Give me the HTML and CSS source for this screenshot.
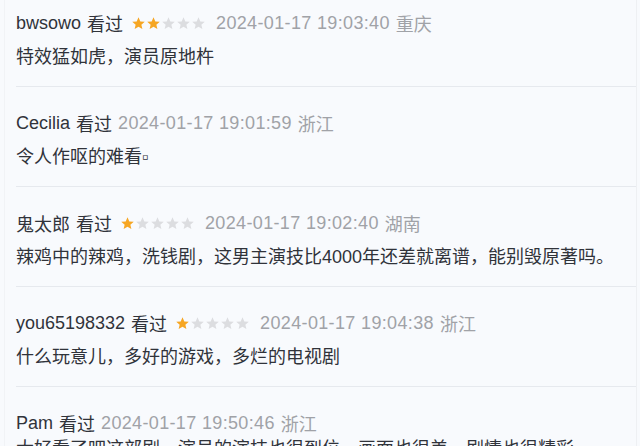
FILE: index.html
```html
<!DOCTYPE html>
<html lang="zh-CN">
<head>
  <meta charset="UTF-8">
  <meta name="viewport" content="width=device-width, initial-scale=1.0">
  <title>短评</title>
  <link rel="stylesheet" href="styles.css">
</head>
<body>
  <main class="comments">
    <div class="comment">
      <div class="comment-info">
        <span class="user">bwsowo</span>
        <span class="watched">看过</span>
        <span class="stars" data-rating="2">
          <svg viewBox="0 0 24 24"><path class="on" d="M12 2l2.9 6.6 7.1.6-5.4 4.7 1.6 7-6.2-3.7-6.2 3.7 1.6-7L2 9.2l7.1-.6z"/></svg>
          <svg viewBox="0 0 24 24"><path class="on" d="M12 2l2.9 6.6 7.1.6-5.4 4.7 1.6 7-6.2-3.7-6.2 3.7 1.6-7L2 9.2l7.1-.6z"/></svg>
          <svg viewBox="0 0 24 24"><path d="M12 2l2.9 6.6 7.1.6-5.4 4.7 1.6 7-6.2-3.7-6.2 3.7 1.6-7L2 9.2l7.1-.6z"/></svg>
          <svg viewBox="0 0 24 24"><path d="M12 2l2.9 6.6 7.1.6-5.4 4.7 1.6 7-6.2-3.7-6.2 3.7 1.6-7L2 9.2l7.1-.6z"/></svg>
          <svg viewBox="0 0 24 24"><path d="M12 2l2.9 6.6 7.1.6-5.4 4.7 1.6 7-6.2-3.7-6.2 3.7 1.6-7L2 9.2l7.1-.6z"/></svg>
        </span>
        <span class="time">2024-01-17 19:03:40</span>
        <span class="location">重庆</span>
      </div>
      <p class="comment-text">特效猛如虎，演员原地杵</p>
    </div>

    <div class="comment">
      <div class="comment-info">
        <span class="user">Cecilia</span>
        <span class="watched">看过</span>
        <span class="time">2024-01-17 19:01:59</span>
        <span class="location">浙江</span>
      </div>
      <p class="comment-text">令人作呕的难看▫</p>
    </div>

    <div class="comment">
      <div class="comment-info">
        <span class="user">鬼太郎</span>
        <span class="watched">看过</span>
        <span class="stars" data-rating="1">
          <svg viewBox="0 0 24 24"><path class="on" d="M12 2l2.9 6.6 7.1.6-5.4 4.7 1.6 7-6.2-3.7-6.2 3.7 1.6-7L2 9.2l7.1-.6z"/></svg>
          <svg viewBox="0 0 24 24"><path d="M12 2l2.9 6.6 7.1.6-5.4 4.7 1.6 7-6.2-3.7-6.2 3.7 1.6-7L2 9.2l7.1-.6z"/></svg>
          <svg viewBox="0 0 24 24"><path d="M12 2l2.9 6.6 7.1.6-5.4 4.7 1.6 7-6.2-3.7-6.2 3.7 1.6-7L2 9.2l7.1-.6z"/></svg>
          <svg viewBox="0 0 24 24"><path d="M12 2l2.9 6.6 7.1.6-5.4 4.7 1.6 7-6.2-3.7-6.2 3.7 1.6-7L2 9.2l7.1-.6z"/></svg>
          <svg viewBox="0 0 24 24"><path d="M12 2l2.9 6.6 7.1.6-5.4 4.7 1.6 7-6.2-3.7-6.2 3.7 1.6-7L2 9.2l7.1-.6z"/></svg>
        </span>
        <span class="time">2024-01-17 19:02:40</span>
        <span class="location">湖南</span>
      </div>
      <p class="comment-text">辣鸡中的辣鸡，洗钱剧，这男主演技比4000年还差就离谱，能别毁原著吗。</p>
    </div>

    <div class="comment">
      <div class="comment-info">
        <span class="user">you65198332</span>
        <span class="watched">看过</span>
        <span class="stars" data-rating="1">
          <svg viewBox="0 0 24 24"><path class="on" d="M12 2l2.9 6.6 7.1.6-5.4 4.7 1.6 7-6.2-3.7-6.2 3.7 1.6-7L2 9.2l7.1-.6z"/></svg>
          <svg viewBox="0 0 24 24"><path d="M12 2l2.9 6.6 7.1.6-5.4 4.7 1.6 7-6.2-3.7-6.2 3.7 1.6-7L2 9.2l7.1-.6z"/></svg>
          <svg viewBox="0 0 24 24"><path d="M12 2l2.9 6.6 7.1.6-5.4 4.7 1.6 7-6.2-3.7-6.2 3.7 1.6-7L2 9.2l7.1-.6z"/></svg>
          <svg viewBox="0 0 24 24"><path d="M12 2l2.9 6.6 7.1.6-5.4 4.7 1.6 7-6.2-3.7-6.2 3.7 1.6-7L2 9.2l7.1-.6z"/></svg>
          <svg viewBox="0 0 24 24"><path d="M12 2l2.9 6.6 7.1.6-5.4 4.7 1.6 7-6.2-3.7-6.2 3.7 1.6-7L2 9.2l7.1-.6z"/></svg>
        </span>
        <span class="time">2024-01-17 19:04:38</span>
        <span class="location">浙江</span>
      </div>
      <p class="comment-text">什么玩意儿，多好的游戏，多烂的电视剧</p>
    </div>

    <div class="comment">
      <div class="comment-info">
        <span class="user">Pam</span>
        <span class="watched">看过</span>
        <span class="time">2024-01-17 19:50:46</span>
        <span class="location">浙江</span>
      </div>
      <p class="comment-text">太好看了吧这部剧，演员的演技也很到位，画面也很美，剧情也很精彩</p>
    </div>
  </main>
</body>
</html>
```

FILE: styles.css
```css
/* 短评列表 */
body {
  margin: 0;
  padding: 0;
  background: #f8fafd;
  font-family: "Liberation Sans", Arial, "Noto Sans CJK SC", sans-serif;
  color: #30333a;
  overflow: hidden;
}

.comments {
  margin: 0 3px 0 4px;
  border-left: 1px solid #f1f3f6;
  border-right: 1px solid #eef0f3;
  min-height: 100vh;
}

.comment {
  margin-left: 11px;
  padding: 20px 0 11px;
  border-bottom: 1px solid #e6e9ee;
}

.comment:first-child {
  padding-top: 7px;
}

.comment-info {
  display: flex;
  align-items: center;
  gap: 6px;
  height: 32px;
  font-size: 18px;
  white-space: nowrap;
}

.user,
.watched {
  color: #30333a;
}

.stars {
  display: inline-flex;
  margin: 0 4px 0 2px;
}

.stars svg {
  width: 15px;
  height: 15px;
  display: block;
}

.stars path {
  fill: #dcdde0;
}

.stars path.on {
  fill: #f6a623;
}

.time,
.location {
  color: #a0a2a7;
}

.time {
  letter-spacing: 0.35px;
}

.comment-text {
  margin: 0;
  font-size: 18px;
  line-height: 36px;
  color: #30333a;
  white-space: nowrap;
}

.comment:last-child .comment-text {
  margin-top: -8px;
}
```
